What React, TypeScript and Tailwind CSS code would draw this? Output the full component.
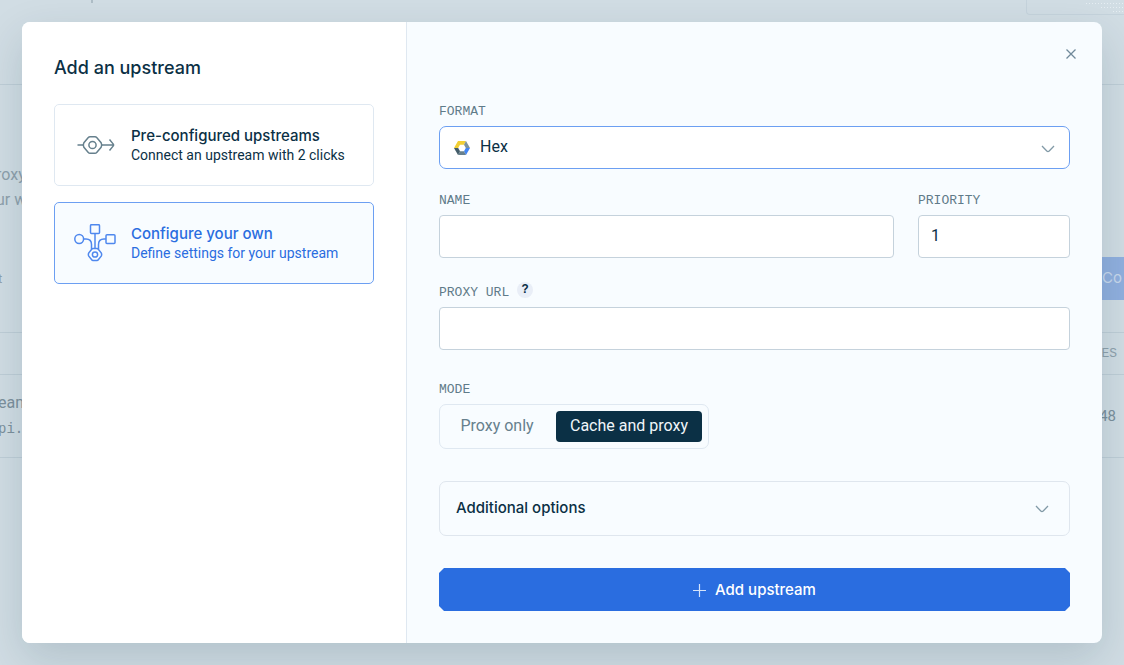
import { useState, type ReactNode } from "react";

const modes = [
  { value: "proxy", label: "Proxy only", width: "w-[102px]" },
  { value: "cache", label: "Cache and proxy", width: "w-[146px]" },
];

const labelClass = "block h-5 text-[13px] leading-[22px] font-['Liberation_Mono',monospace] text-[#5f7b89]";
const inputClass =
  "mt-[5px] block h-[43px] w-full rounded-[4px] border border-[#c5d2dc] bg-white px-3 pb-0.5 text-base text-[#0b3045] outline-none";

function ProxyIcon() {
  return (
    <svg width="38" height="20" viewBox="0 0 38 20" fill="none" stroke="currentColor" strokeWidth="1.5">
      <path d="M0.500 10h6M24.500 10h12M32.500 4.500L36.500 9.400v1.200l-4 4.900" strokeLinejoin="round" />
      <path d="M13 1.700h5q1 0 1.700.8l4.400 5.200q1.200 2.300 0 4.600l-4.400 5.200q-.7.8-1.700.8h-5q-1 0-1.700-.8l-4.400-5.200q-1.200-2.300 0-4.600l4.400-5.200q.7-.8 1.700-.8z" />
      <circle cx="15.500" cy="10" r="3.600" />
    </svg>
  );
}

function NodesIcon() {
  return (
    <svg width="42" height="38" viewBox="0 0 42 38" fill="none" stroke="currentColor" strokeWidth="1.5">
      <circle cx="5.200" cy="15" r="4.400" />
      <rect x="16.500" y="0.700" width="9" height="8.800" rx="1" />
      <rect x="32" y="10.700" width="9" height="8.800" rx="1" />
      <path d="M21 9.500v15M9.500 15h2.500q5.500 0 5.500 5.500v4.500M32 15h-2q-5.500 0-5.500 5.500v4.500" />
      <path d="M19 24.500h4q.8 0 1.300.7l2.900 3.600q.9 1.700 0 3.400l-2.900 3.600q-.5.7-1.300.7h-4q-.8 0-1.300-.7l-2.900-3.600q-.9-1.700 0-3.400l2.900-3.600q.5-.7 1.300-.7z" />
      <circle cx="21" cy="30.500" r="2.600" />
    </svg>
  );
}

function HexIcon() {
  return (
    <svg width="16" height="14" viewBox="0 0 16 14" className="absolute top-1/2 left-[15px] -translate-y-1/2">
      <path d="M4 0h8l-2 3.800H6L4.200 7H0z" fill="#f2cf35" />
      <path d="M12 0l4 7h-4.200L10 3.800z" fill="#7c929d" />
      <path d="M16 7l-4 7-2-3.800L11.800 7z" fill="#4285f4" />
      <path d="M12 14H4l2-3.800h4z" fill="#68808d" />
      <path d="M4 14L0 7h4.200L6 10.200z" fill="#435c69" />
    </svg>
  );
}

function Chevron({ className }: { className?: string }) {
  return (
    <svg width="14" height="8" viewBox="0 0 14 8" fill="none" stroke="#829aa7" strokeWidth="1.3" className={className}>
      <path d="M1 1l4.800 5q1.200 1.100 2.400 0L13 1" />
    </svg>
  );
}

function Choice({
  icon,
  title,
  text,
  active,
  onClick,
}: {
  icon: ReactNode;
  title: string;
  text: string;
  active: boolean;
  onClick: () => void;
}) {
  return (
    <button
      type="button"
      aria-pressed={active}
      onClick={onClick}
      className={`flex h-[82px] w-full items-center rounded-[5px] border pl-[19px] text-left ${
        active ? "border-[#6c9ff2] bg-[#f8fcff] text-[#2a6de0]" : "border-[#dfe8f1] bg-white text-[#0b3045]"
      }`}
    >
      <span className={`flex w-[57px] ${active ? "text-[#4f88ee]" : "pl-[3px] text-[#66808d]"}`}>{icon}</span>
      <span>
        <span className="block font-['Inter',sans-serif] text-[15px] leading-5 font-medium">{title}</span>
        <span className="block text-sm leading-[18px]">{text}</span>
      </span>
    </button>
  );
}

function Backdrop() {
  return (
    <div aria-hidden="true" className="bg-[#d1dde4] text-[#8fa1ac]">
      <div className="flex h-[85px] items-start justify-between border-b border-[#bfced7]">
        <span className="ml-[91px] h-[3px] w-0.5 bg-[#aebdc6]" />
        <span className="flex h-[15px] w-[98px] justify-end rounded-bl-[4px] border-b border-l border-[#c5d3dc] pt-[2px]">
          <svg width="40" height="12" viewBox="0 0 40 12" stroke="#e6eef3" strokeDasharray="1 2">
            <path d="M2 1.500h38M17 5.500h23M29 9.500h11" />
          </svg>
        </span>
      </div>
      <div className="border-b border-[#bfced7] pt-[77px] pb-8">
        <div className="-ml-1 text-base leading-[25px]">
          <p>roxy</p>
          <p>ur w</p>
        </div>
        <div className="mt-[45px] flex h-[43px] items-center justify-between">
          <span className="-ml-0.5 text-[13px]">t</span>
          <span className="flex h-full w-[22px] items-center bg-[#91b0df] font-['Inter',sans-serif] text-[15px] text-[#c9d9ed]">
            Co
          </span>
        </div>
      </div>
      <div className="flex h-[42px] items-center justify-end border-b border-[#bfced7] pr-[7px] font-['Liberation_Mono',monospace] text-[13px]">
        ES
      </div>
      <div className="flex h-[83px] items-center justify-between border-b border-[#bfced7] text-[#7c909c]">
        <div className="-ml-0.5">
          <p className="text-base leading-[26px]">eam</p>
          <p className="font-['Liberation_Mono',monospace] text-sm leading-[26px]">pi.e</p>
        </div>
        <span className="pr-2 text-[15px]">48</span>
      </div>
    </div>
  );
}

export default function App() {
  const [source, setSource] = useState("custom");
  const [mode, setMode] = useState("cache");
  const [expanded, setExpanded] = useState(false);

  return (
    <div className="min-h-screen bg-[#d1dde4] font-['Roboto',sans-serif]">
      <Backdrop />

      <div className="absolute inset-0 p-[22px]">
        <div
          role="dialog"
          aria-labelledby="dialog-title"
          className="flex min-h-full overflow-hidden rounded-[8px] bg-[#f8fcff] shadow-[0_16px_44px_rgba(12,48,69,0.16)]"
        >
          <aside className="w-[385px] shrink-0 border-r border-[#dfe8f1] bg-white px-8 pt-8">
            <h1
              id="dialog-title"
              className="font-['Inter',sans-serif] text-lg leading-7 font-medium text-[#0b3045]"
            >
              Add an upstream
            </h1>
            <div className="mt-[22px] flex flex-col gap-4">
              <Choice
                icon={<ProxyIcon />}
                title="Pre-configured upstreams"
                text="Connect an upstream with 2 clicks"
                active={source === "preset"}
                onClick={() => setSource("preset")}
              />
              <Choice
                icon={<NodesIcon />}
                title="Configure your own"
                text="Define settings for your upstream"
                active={source === "custom"}
                onClick={() => setSource("custom")}
              />
            </div>
          </aside>

          <form className="min-w-0 flex-1 px-8 pb-8" onSubmit={(e) => e.preventDefault()}>
            <div className="flex h-[79px] items-start justify-end pt-[19px]">
              <button type="button" aria-label="Close" className="-mr-[14px] p-2 text-[#70899a]">
                <svg width="10" height="10" viewBox="0 0 10 10" fill="none" stroke="currentColor" strokeWidth="1.300">
                  <path d="M0.500 0.500l9 9M9.500 0.500l-9 9" />
                </svg>
              </button>
            </div>

            <div>
              <label htmlFor="format" className={labelClass}>
                FORMAT
              </label>
              <div className="relative mt-[5px]">
                <select
                  id="format"
                  className="h-[43px] w-full appearance-none rounded-[7px] border border-[#6c9ff2] bg-white pr-10 pb-0.5 pl-10 text-base text-[#0b3045] outline-none"
                >
                  <option>Hex</option>
                </select>
                <HexIcon />
                <Chevron className="pointer-events-none absolute top-[19px] right-[15px]" />
              </div>
            </div>

            <div className="mt-[21px] flex gap-6">
              <div className="min-w-0 flex-1">
                <label htmlFor="name" className={labelClass}>
                  NAME
                </label>
                <input id="name" type="text" className={inputClass} />
              </div>
              <div className="w-[152px]">
                <label htmlFor="priority" className={labelClass}>
                  PRIORITY
                </label>
                <input id="priority" type="text" inputMode="numeric" defaultValue="1" className={inputClass} />
              </div>
            </div>

            <div className="mt-6">
              <div className="flex gap-2">
                <label htmlFor="proxy-url" className={labelClass}>
                  PROXY URL
                </label>
                <button
                  type="button"
                  aria-label="About the proxy URL"
                  className="size-4 rounded-full bg-[#e9eef7] font-['Liberation_Mono',monospace] text-xs leading-4 font-bold text-[#0b3045]"
                >
                  ?
                </button>
              </div>
              <input id="proxy-url" type="text" className={inputClass} />
            </div>

            <fieldset className="mt-[29px]">
              <legend className={labelClass}>MODE</legend>
              <div className="mt-[5px] inline-flex h-[45px] items-center gap-2 rounded-[7px] border border-[#dfe8f1] p-[6px] align-top">
                {modes.map((m) => (
                  <label
                    key={m.value}
                    className={`flex h-[31px] cursor-pointer items-center justify-center rounded-[4px] pb-0.5 text-base ${m.width} ${
                      mode === m.value ? "bg-[#0b3045] text-[#f0f6fa]" : "text-[#66808d]"
                    }`}
                  >
                    <input
                      type="radio"
                      name="mode"
                      value={m.value}
                      checked={mode === m.value}
                      onChange={() => setMode(m.value)}
                      className="sr-only"
                    />
                    {m.label}
                  </label>
                ))}
              </div>
            </fieldset>

            <button
              type="button"
              aria-expanded={expanded}
              onClick={() => setExpanded((v) => !v)}
              className="mt-8 flex h-[55px] w-full items-center justify-between rounded-[7px] border border-[#dfe6ee] pr-5 pl-4 font-['Inter',sans-serif] text-[15px] font-medium text-[#0b3045]"
            >
              Additional options
              <Chevron />
            </button>

            <button
              type="submit"
              className="mt-8 flex h-[43px] w-full items-center justify-center gap-[9px] bg-[#2a6de0] pt-px font-['Inter',sans-serif] text-[15px] font-medium text-white [clip-path:polygon(5px_0,calc(100%-5px)_0,100%_5px,100%_calc(100%-5px),calc(100%-5px)_100%,5px_100%,0_calc(100%-5px),0_5px)]"
            >
              <svg width="13" height="13" viewBox="0 0 13 13" stroke="#d5e3fa" strokeWidth="1.200">
                <path d="M6.500 0v13M0 6.500h13" />
              </svg>
              Add upstream
            </button>
          </form>
        </div>
      </div>
    </div>
  );
}
